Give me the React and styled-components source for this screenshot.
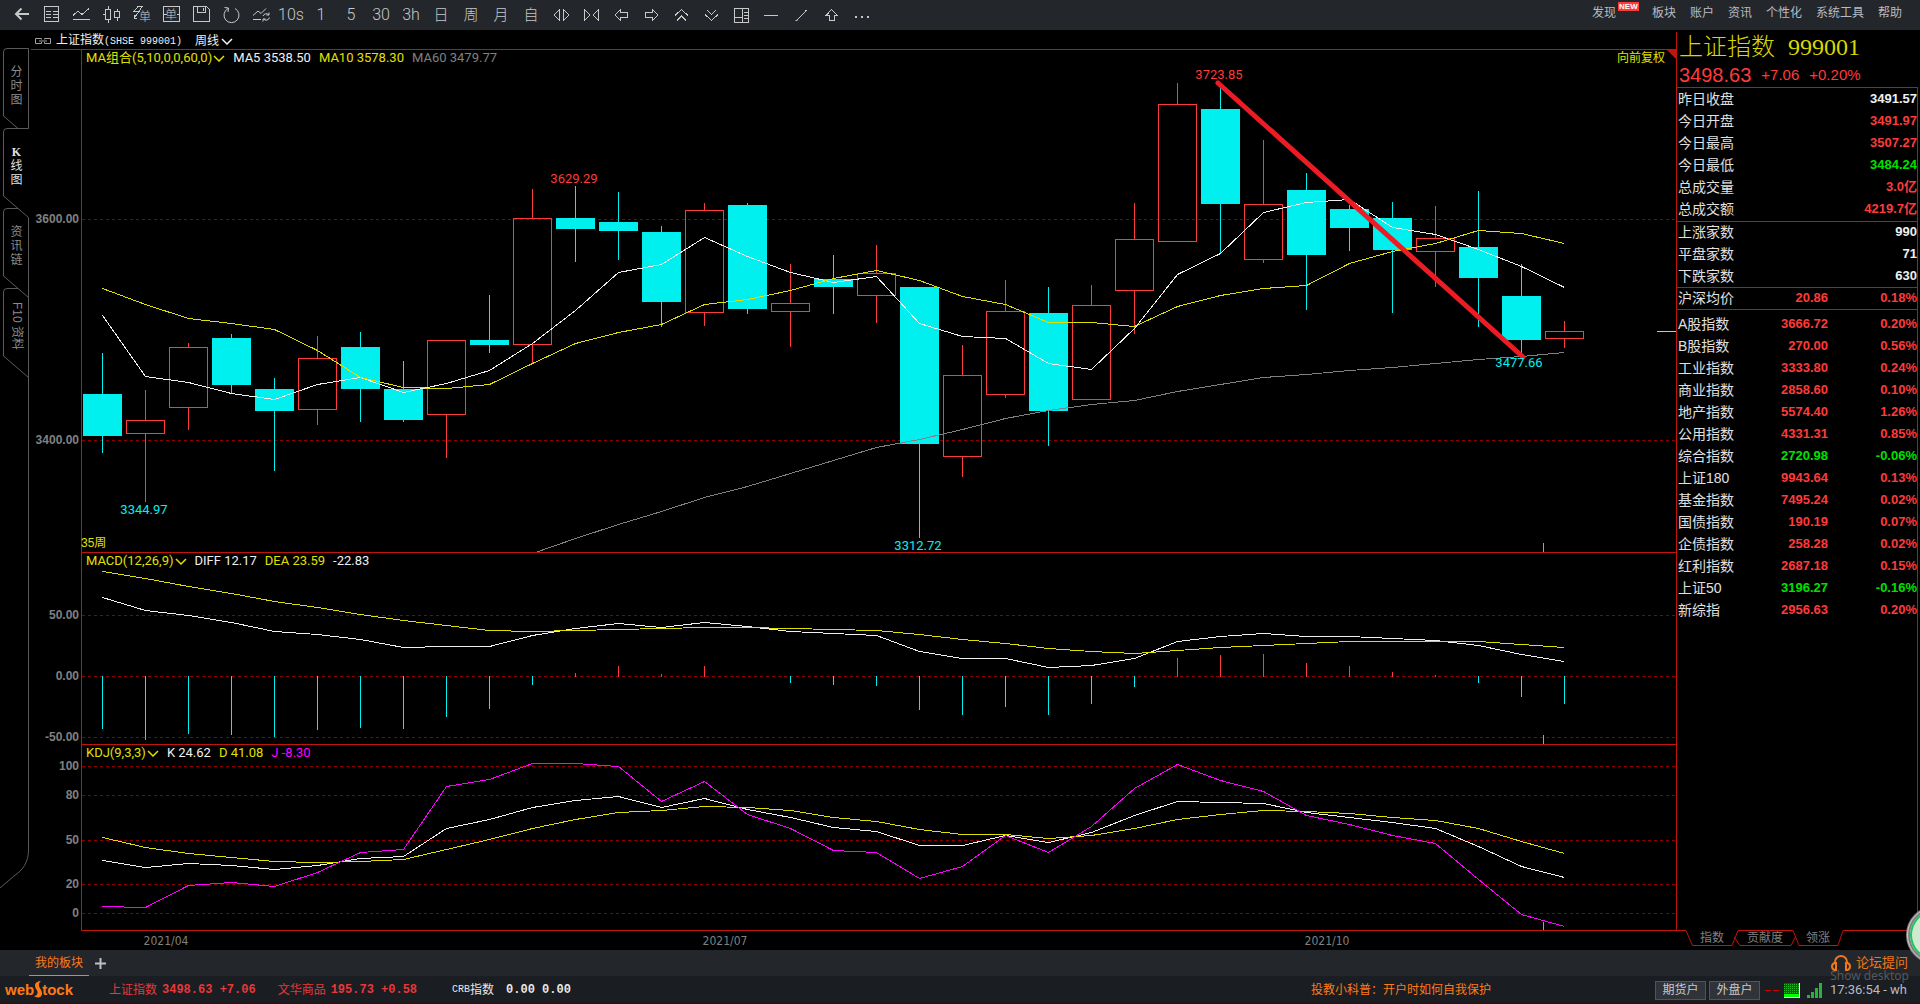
import React from "react";
import styled, { createGlobalStyle } from "styled-components";

const RED = "#c0140c";
const UP = "#ff3a3a";
const DOWN = "#00f0f0";
const YELLOW = "#e0e000";
const WHITE = "#f0f0f0";
const GREY = "#808080";
const PINK = "#ff00ff";

// plot area in chart units, one candle every 43 units
const LEFT = 81;
const WIDTH = 1595;
const xOf = (i) => 102 + i * 43;

// high, body top, body bottom, low, rising
const candles = [
  [353, 394, 436, 453, 0], [390, 420, 433, 502, 1], [343, 347, 407, 430, 1],
  [334, 338, 385, 393, 0], [378, 389, 411, 471, 0], [336, 358, 409, 425, 1],
  [332, 347, 389, 422, 0], [361, 389, 420, 422, 0], [340, 340, 414, 458, 1],
  [295, 340, 345, 353, 0], [189, 218, 344, 363, 1], [186, 218, 229, 262, 0],
  [192, 222, 231, 260, 0], [226, 232, 302, 327, 0], [203, 210, 312, 326, 1],
  [203, 205, 309, 314, 0], [264, 303, 311, 347, 1], [255, 279, 287, 314, 0],
  [245, 273, 295, 323, 1], [287, 287, 444, 538, 0], [345, 375, 456, 477, 1],
  [280, 311, 394, 398, 1], [287, 313, 411, 446, 0], [285, 305, 399, 400, 1],
  [203, 239, 290, 334, 1], [83, 104, 241, 242, 1], [88, 109, 204, 254, 0],
  [140, 204, 259, 263, 1], [173, 190, 255, 310, 0], [205, 209, 228, 251, 0],
  [202, 218, 250, 313, 0], [206, 238, 251, 287, 1], [191, 247, 278, 327, 0],
  [264, 296, 340, 353, 0], [321, 331, 338, 348, 1],
];

const ma5 = [315, 376, 382, 393, 399, 384, 377, 392, 383, 370, 343, 310, 272, 264, 237, 256, 272, 282, 276, 323, 336, 338, 363, 369, 328, 274, 253, 212, 202, 199, 227, 234, 249, 266, 287];
const ma10 = [288, 304, 318, 323, 329, 350, 377, 387, 388, 384, 363, 343, 332, 324, 304, 299, 290, 278, 270, 280, 296, 304, 322, 322, 326, 306, 295, 288, 285, 263, 251, 243, 230, 233, 243];
const ma60 = [553, 538, 524, 511, 497, 486, 473, 460, 447, 439, 429, 418, 410, 404, 400, 391, 384, 377, 374, 370, 367, 363, 359, 356, 352];

const diff = [597, 610, 615, 622, 631, 634, 639, 647, 646, 646, 635, 628, 623, 627, 622, 626, 631, 633, 635, 651, 658, 658, 667, 665, 658, 641, 636, 633, 636, 636, 638, 640, 645, 654, 661];
const dea = [571, 578, 586, 593, 601, 607, 614, 620, 625, 630, 631, 630, 629, 628, 627, 627, 628, 629, 630, 634, 639, 643, 648, 651, 653, 650, 647, 645, 643, 641, 641, 641, 641, 644, 647];
const macd = [729, 740, 734, 735, 737, 730, 728, 729, 717, 709, 685, 673, 666, 674, 666, 676, 683, 685, 686, 710, 715, 707, 715, 704, 687, 658, 655, 654, 663, 666, 672, 675, 683, 697, 704];

const kLine = [860, 867, 863, 865, 869, 865, 858, 856, 828, 819, 807, 800, 796, 807, 798, 809, 817, 827, 831, 845, 845, 835, 842, 832, 815, 801, 802, 803, 812, 817, 822, 828, 846, 866, 877];
const dLine = [837, 847, 853, 857, 861, 862, 861, 859, 849, 839, 828, 819, 812, 810, 806, 807, 810, 817, 821, 829, 834, 834, 838, 835, 828, 819, 814, 810, 811, 813, 817, 820, 828, 841, 853];
const jLine = [906, 907, 885, 882, 886, 872, 852, 849, 786, 779, 763, 763, 766, 801, 781, 814, 828, 850, 852, 878, 866, 835, 852, 826, 788, 764, 780, 791, 815, 824, 835, 843, 879, 914, 926];

const marks = [
  ["3629.29", 574, 179, UP],
  ["3344.97", 144, 510, DOWN],
  ["3312.72", 918, 546, DOWN],
  ["3723.85", 1219, 75, UP],
  ["3477.66", 1519, 363, DOWN],
];

const quoteBlocks = [
  [
    ["昨日收盘", "", "3491.57", "flat"],
    ["今日开盘", "", "3491.97", "up"],
    ["今日最高", "", "3507.27", "up"],
    ["今日最低", "", "3484.24", "down"],
    ["总成交量", "", "3.0亿", "up"],
    ["总成交额", "", "4219.7亿", "up"],
  ],
  [
    ["上涨家数", "", "990", "flat"],
    ["平盘家数", "", "71", "flat"],
    ["下跌家数", "", "630", "flat"],
  ],
  [["沪深均价", "20.86", "0.18%", "up"]],
  [
    ["A股指数", "3666.72", "0.20%", "up"],
    ["B股指数", "270.00", "0.56%", "up"],
    ["工业指数", "3333.80", "0.24%", "up"],
    ["商业指数", "2858.60", "0.10%", "up"],
    ["地产指数", "5574.40", "1.26%", "up"],
    ["公用指数", "4331.31", "0.85%", "up"],
    ["综合指数", "2720.98", "-0.06%", "down"],
    ["上证180", "9943.64", "0.13%", "up"],
    ["基金指数", "7495.24", "0.02%", "up"],
    ["国债指数", "190.19", "0.07%", "up"],
    ["企债指数", "258.28", "0.02%", "up"],
    ["红利指数", "2687.18", "0.15%", "up"],
    ["上证50", "3196.27", "-0.16%", "down"],
    ["新综指", "2956.63", "0.20%", "up"],
  ],
];

const tones = { up: UP, down: "#00e000", flat: WHITE };

const icons = {
  back: <path d="M5 9H18M10.5 3.5 5 9l5.5 5.5" strokeWidth="2" shapeRendering="auto" />,
  table: <path d="M3.5 1.5h14v15h-14zM5 6.5h5M11.5 6.5h5M5 9.5h5M11.5 9.5h5M5 12.5h5M11.5 12.5h5" />,
  line: <path d="M2 10.5 7 6l4 3.5L18 3.5M2 14.5H19" />,
  candle: <path d="M4.5 4.5h5v10h-5zM7.5 1v3.5M7.5 14.5V18M13.5 6.5h5v6h-5zM16.5 4v2.5M16.5 12.5v3M2 9.5h2" />,
  flash: <path d="M7 1.5l-4 5h5L3 13M7 1.5h4l-3 5M3 10v3h3" />,
  box: <path d="M2.5 1.5h16v15h-16zM2.5 9.5h3M15.5 9.5h3" />,
  save: <path d="M2.5 1.5h13l3 3v12h-16zM6.5 1.5v6h8v-6M12.5 3v3" />,
  refresh: <path d="M7 3.5a7.5 7.5 0 1 0 7 0M3.5 2.5l4 .5-.5 4" shapeRendering="auto" />,
  trend: <path d="M2 10.5 7 6l3 2.5 5-5M2 14.5h8M12 11a3.5 3.5 0 0 1 6-1M18 7.5V10h-2.5M18.500 12.5a3.5 3.5 0 0 1-6 1.5M12 16.5V14h2.5" shapeRendering="auto" />,
  spread: <path d="M8.5 4.5 3 10l5.5 5.5zM12.5 4.5v11L18 10z" />,
  squeeze: <path d="M3.5 4.5 9 10l-5.5 5.5zM17.5 4.5 12 10l5.5 5.5z" />,
  left: <path d="M9.5 4.5 4 10l5.5 5.5v-3h7v-5h-7z" />,
  right: <path d="M11.5 4.5 17 10l-5.5 5.5v-3h-7v-5h7z" />,
  up: <path d="M4 10.5l6.5-6 6.5 6M6 15.5l4.5-4.5 4.5 4.5" />,
  down: <path d="M4 9.5l6.5 6 6.5-6M6 5l4.5 4.5L15 5" />,
  layout: <path d="M3.5 3.5h14v14h-14zM11.5 3.5v14M3.5 12.5h8M13 7.5h3.5M13 10.5h3.5M13 13.5h3.5" />,
  minus: <path d="M3 10.5h14" />,
  segment: <path d="M6 15 15 6M4.500 15.500h2M14 5.500h2" shapeRendering="auto" />,
  raise: <path d="M10.5 4.5 5.5 10h3v5.5h5V10h2.500z" />,
  more: <path d="M4 12h2M10 12h2M16 12h2" strokeWidth="2" />,
};

const tools = [
  ["back", "返回"], ["table", "报价"], ["line", "分时"], ["candle", "K线"], ["flash", "闪电下单", "单"],
  ["box", "下单", "单"], ["save", "保存"], ["refresh", "刷新"], ["trend", "叠加"],
  "10s", "1", "5", "30", "3h", "日", "周", "月", "自",
  ["spread", "放大"], ["squeeze", "缩小"], ["left", "左移"], ["right", "右移"], ["up", "上一个"],
  ["down", "下一个"], ["layout", "布局"], ["minus", "水平线"], ["segment", "线段"], ["raise", "上箭头"], ["more", "更多"],
];

function Tool({ item }) {
  if (typeof item === "string") {
    return <ToolButton $cjk={item > "z"}>{item}</ToolButton>;
  }
  const [name, label, glyph] = item;
  return (
    <ToolButton aria-label={label}>
      <ToolIcon viewBox="0 0 20 20">
        {icons[name]}
        {glyph && <text x={name === "box" ? 4 : 8} y={name === "box" ? 14 : 16}>{glyph}</text>}
      </ToolIcon>
    </ToolButton>
  );
}

function Chevron({ color }) {
  return (
    <svg width="12" height="8" viewBox="0 0 12 8" fill="none" stroke={color} strokeWidth="1.5" aria-hidden="true">
      <path d="M1 2l5 5 5-5" />
    </svg>
  );
}

function Line({ data, color, from = 0 }) {
  const points = data.map((y, i) => `${xOf(i + from) + 0.5},${y + 0.5}`).join(" ");
  return <polyline points={points} fill="none" stroke={color} />;
}

function Candle({ x, data }) {
  const [high, top, bottom, low, rising] = data;
  if (!rising) {
    return (
      <g fill={DOWN}>
        <rect x={x} y={high} width="1" height={low - high} />
        <rect x={x - 19} y={top} width="39" height={bottom - top} />
      </g>
    );
  }
  return (
    <g stroke={UP} fill="none">
      <path d={`M${x + 0.5} ${high}V${top}M${x + 0.5} ${bottom}V${low}`} />
      <rect x={x - 18.5} y={top + 0.5} width="38" height={bottom - top} />
    </g>
  );
}

function Pane({ top, height, axis, first, last, legend, children }) {
  const [title, ...values] = legend;
  return (
    <PaneRow $grow={height}>
      <Axis $lined={first}>
        {axis.map(([label, y]) => (
          <AxisLabel key={label} style={{ top: `${((y - top) / height) * 100}%` }}>{label}</AxisLabel>
        ))}
      </Axis>
      <Plot>
        <PlotSvg viewBox={`${LEFT} ${top} ${WIDTH} ${height}`} preserveAspectRatio="none" role="img" aria-label={title[0]}>
          {axis.map(([label, y]) => (
            <path key={label} d={`M82 ${y + 0.5}H1676`} stroke="#8c0000" strokeDasharray="3 3" />
          ))}
          {children}
          <path d={`M1543.5 ${top + height - 9}v9`} stroke="#a0a0a0" />
          <path d={`M81.5 ${top + height}V${top + 0.5}H1676`} stroke={RED} fill="none" />
          {last && <path d="M81 930.5H1676" stroke={RED} />}
        </PlotSvg>
        <Legend>
          <Indicator $color={title[1]}>{title[0]}<Chevron color={title[1]} /></Indicator>
          {values.map(([text, color]) => (
            <LegendItem key={text} $color={color}>{text}</LegendItem>
          ))}
        </Legend>
        {first && (
          <>
            <Adjust>向前复权</Adjust>
            <Corner />
            <Span>35周</Span>
            {marks.map(([text, x, y, color]) => (
              <Mark
                key={text}
                $color={color}
                style={{ left: `${((x - LEFT) / WIDTH) * 100}%`, top: `${((y - top) / height) * 100}%` }}
              >
                {text}
              </Mark>
            ))}
          </>
        )}
      </Plot>
    </PaneRow>
  );
}

function Charts() {
  return (
    <ChartColumn>
      <ChartHead>
        <svg width="16" height="6" viewBox="0 0 16 6" fill="none" stroke="#a0a0a0" aria-hidden="true">
          <path d="M6.5 1.5v-1h-6v5h6V4M9.5 1.5v-1h6v5h-6V4M4 3h8" />
        </svg>
        <Symbol>上证指数<SymbolCode>(SHSE 999001)</SymbolCode></Symbol>
        <Period>周线<Chevron color={WHITE} /></Period>
      </ChartHead>
      <Pane
        first
        top={49}
        height={503}
        axis={[["3600.00", 219], ["3400.00", 440]]}
        legend={[["MA组合(5,10,0,0,60,0)", YELLOW], ["MA5 3538.50", WHITE], ["MA10 3578.30", YELLOW], ["MA60 3479.77", GREY]]}
      >
        {candles.map((c, i) => <Candle key={i} x={xOf(i)} data={c} />)}
        <Line data={ma60} color={GREY} from={10} />
        <Line data={ma5} color={WHITE} />
        <Line data={ma10} color={YELLOW} />
        <path d="M1657 331.5H1676" stroke={YELLOW} />
        <path d="M1218 83 1523 357" stroke="#ed1c24" strokeWidth="5" strokeLinecap="round" shapeRendering="auto" />
      </Pane>
      <Pane
        top={552}
        height={192}
        axis={[["50.00", 615], ["0.00", 676], ["-50.00", 737]]}
        legend={[["MACD(12,26,9)", YELLOW], ["DIFF 12.17", WHITE], ["DEA 23.59", YELLOW], ["-22.83", WHITE]]}
      >
        {macd.map((y, i) => y !== 676 && (
          <path key={i} d={`M${xOf(i) + 0.5} ${y > 676 ? 676 : 677}V${y}`} stroke={y > 676 ? DOWN : UP} />
        ))}
        <Line data={diff} color={WHITE} />
        <Line data={dea} color={YELLOW} />
      </Pane>
      <Pane
        last
        top={744}
        height={187}
        axis={[["100", 766], ["80", 795], ["50", 840], ["20", 884], ["0", 913]]}
        legend={[["KDJ(9,3,3)", YELLOW], ["K 24.62", WHITE], ["D 41.08", YELLOW], ["J -8.30", PINK]]}
      >
        <Line data={kLine} color={WHITE} />
        <Line data={dLine} color={YELLOW} />
        <Line data={jLine} color={PINK} />
      </Pane>
      <Dates>
        {[["2021/04", 166], ["2021/07", 725], ["2021/10", 1327]].map(([text, x]) => (
          <DateLabel key={text} style={{ left: `${((x - LEFT) / WIDTH) * 100}%` }}>{text}</DateLabel>
        ))}
      </Dates>
    </ChartColumn>
  );
}

function Quotes() {
  return (
    <QuotePanel>
      <QuoteBody>
        <QuoteTitle>上证指数 <TitleCode>999001</TitleCode></QuoteTitle>
        <QuotePrice>
          <Price>3498.63</Price>
          <span>+7.06</span>
          <span>+0.20%</span>
        </QuotePrice>
        {quoteBlocks.map((rows, i) => (
          <Block key={i} $pad={i === 0 ? "1px 0" : i === 3 ? "4px 0 0" : "0"}>
            <Table>
              <tbody>
                {rows.map(([name, price, value, tone]) => (
                  <tr key={name}>
                    <Name scope="row">{name}</Name>
                    <Cell $tone={tone}>{price}</Cell>
                    <Cell $tone={tone}>{value}</Cell>
                  </tr>
                ))}
              </tbody>
            </Table>
          </Block>
        ))}
      </QuoteBody>
      <QuoteTabs>
        <TabLines viewBox="0 0 244 20">
          <path d="M0 .5H10L16.5 15.5H56L62 .5H117L123 15.5H162L167 .5H241M58 7 64 15.5H115L119.5 7" />
        </TabLines>
        <QuoteTab>指数</QuoteTab>
        <QuoteTab>贡献度</QuoteTab>
        <QuoteTab>领涨</QuoteTab>
      </QuoteTabs>
    </QuotePanel>
  );
}

export default function App() {
  return (
    <Page>
      <GlobalStyle />
      <Toolbar>
        <Tools>
          {tools.map((item, i) => <Tool key={i} item={item} />)}
        </Tools>
        <Menu>
          <MenuLink href="#" $badge>发现<Badge>NEW</Badge></MenuLink>
          <MenuLink href="#">板块</MenuLink>
          <MenuLink href="#">账户</MenuLink>
          <MenuLink href="#">资讯</MenuLink>
          <MenuLink href="#">个性化</MenuLink>
          <MenuLink href="#">系统工具</MenuLink>
          <MenuLink href="#">帮助</MenuLink>
        </Menu>
      </Toolbar>

      <Main>
        <Side>
          <SideLines viewBox="0 0 31 920">
            <path d="M28.5 98.5v-80H7q-3.5 0-3.5 3.5v64L18 98.5" />
            <path d="M28.5 98.5H7q-3.5 0-3.5 3.5v64l25 21.5V820C28.5 832 23 840 14 846L0 858" />
            <path d="M18 178.5H7q-3.5 0-3.5 3.5v64l25 21.5" />
            <path d="M18 258.5H7q-3.5 0-3.5 3.5v64l25 21.5" />
          </SideLines>
          <SideTab>分<br />时<br />图</SideTab>
          <SideTab $active><b>K</b>线<br />图</SideTab>
          <SideTab>资<br />讯<br />链</SideTab>
          <SideTab $sideways>F10 资料</SideTab>
        </Side>
        <Charts />
        <Quotes />
      </Main>

      <BoardBar>
        <BoardTab>我的板块</BoardTab>
        <AddButton aria-label="添加板块">
          <svg width="11" height="11" viewBox="0 0 11 11" stroke="#c0c0c0" strokeWidth="2">
            <path d="M5.5 0v11M0 5.5h11" />
          </svg>
        </AddButton>
        <Forum href="#">
          <svg width="20" height="16" viewBox="0 0 20 16" fill="none" stroke="currentColor" strokeWidth="2" aria-hidden="true">
            <path d="M4 9V7a6 6 0 0 1 12 0v2" />
            <path d="M5 8v7H3.5Q1 14 1 11.5T3.5 8zM15 8v7h1.5Q19 14 19 11.5T16.5 8z" />
          </svg>
          论坛提问
        </Forum>
        <Tip>Show desktop</Tip>
        <Bubble />
      </BoardBar>

      <StatusBar>
        <Logo>
          web
          <svg width="8" height="18" viewBox="0 0 8 18" aria-hidden="true">
            <path d="M7 0C4 0 1 1.500 1 4.500c0 3.500 3 4.500 2.500 7.500C3.300 14 2 15 0 15c2 2 7.500 2.500 8-2C8.300 9 5 7.500 5 4 5 2 5.500 1 7 0z" fill="#ff7a18" />
          </svg>
          tock
        </Logo>
        <Ticker href="#">上证指数<b>3498.63 +7.06</b></Ticker>
        <Ticker href="#">文华商品<b>195.73 +0.58</b></Ticker>
        <Ticker href="#" $plain><SymbolCode>CRB</SymbolCode>指数<b>0.00 0.00</b></Ticker>
        <News href="#">投教小科普：开户时如何自我保护</News>
        <Accounts>
          <Account>期货户</Account>
          <Account>外盘户</Account>
        </Accounts>
        <Signals width="60" height="18" viewBox="0 0 60 18" aria-hidden="true">
          <path d="M1 9.5h6M9 9.5h6" stroke="#d00000" />
          <rect x="20" y="2" width="16" height="15" fill="#f0fff0" />
          <rect x="20" y="2" width="15" height="14" fill="#0a5a14" />
          <path d="M20 3.5h15M20 5.5h15M20 7.5h15M20 9.5h15M20 11.5h15" stroke="#28b428" strokeDasharray="1 1" />
          <rect x="20" y="13" width="15" height="3" fill="#00ff00" />
          <path d="M43 14h3v3h-3zM47 11h3v6h-3zM51 7h3v10h-3zM55 2h3v15h-3z" fill="#28b43c" />
        </Signals>
        <Clock>17:36:54 - wh</Clock>
      </StatusBar>
    </Page>
  );
}

const GlobalStyle = createGlobalStyle`
  body {
    margin: 0;
    background: #000;
  }
  * {
    box-sizing: border-box;
  }
  button {
    padding: 0;
    border: 0;
    background: none;
    color: inherit;
    font: inherit;
    cursor: pointer;
  }
  a {
    text-decoration: none;
  }
`;

const Page = styled.div`
  display: flex;
  flex-direction: column;
  height: 100vh;
  min-height: 720px;
  overflow: hidden;
  background: #000;
  color: #ccc;
  font-family: "Liberation Sans", "Noto Sans CJK SC", sans-serif;
  font-size: 12px;
  line-height: 18px;
  white-space: nowrap;
`;

const Toolbar = styled.header`
  display: flex;
  justify-content: space-between;
  flex: none;
  height: 30px;
  padding: 0 18px 0 6px;
  background: #23262b;
`;

const Tools = styled.div`
  display: flex;
  align-items: center;
`;

const ToolButton = styled.button`
  && {
    display: flex;
    align-items: center;
    justify-content: center;
    width: 30px;
    height: 28px;
    color: #c8c8c8;
    font-family: Roboto, "Noto Sans CJK SC", sans-serif;
    font-size: ${(p) => (p.$cjk ? "15px" : "16px")};
    font-weight: 300;
  }
`;

const ToolIcon = styled.svg`
  width: 20px;
  height: 20px;
  fill: none;
  stroke: #c8c8c8;
  shape-rendering: crispEdges;
  text {
    fill: #c8c8c8;
    stroke: none;
    font-size: 12px;
  }
`;

const Menu = styled.nav`
  display: flex;
  gap: 14px;
  padding-top: 4px;
`;

const MenuLink = styled.a`
  position: relative;
  padding-right: ${(p) => (p.$badge ? "22px" : "0")};
  color: #b8bcc2;
`;

const Badge = styled.span`
  position: absolute;
  top: -2px;
  right: -1px;
  width: 21px;
  background: #ff3a3a;
  color: #fff;
  font-size: 8px;
  font-weight: bold;
  line-height: 9px;
  text-align: center;
`;

const Main = styled.main`
  display: flex;
  flex: 1;
  min-height: 0;
`;

const Side = styled.nav`
  position: relative;
  display: flex;
  flex: none;
  flex-direction: column;
  width: 31px;
  padding-top: 18px;
`;

const SideLines = styled.svg`
  position: absolute;
  top: 0;
  left: 0;
  width: 31px;
  height: 920px;
  fill: none;
  stroke: #5a5a5a;
  pointer-events: none;
`;

const SideTab = styled.button`
  && {
    display: flex;
    flex-direction: column;
    align-items: center;
    justify-content: center;
    flex: none;
    height: 80px;
    padding: 0 0 4px 2px;
    color: ${(p) => (p.$active ? "#e0e0e0" : "#8c8c8c")};
    line-height: 14px;
    writing-mode: ${(p) => (p.$sideways ? "vertical-rl" : "horizontal-tb")};
    text-orientation: sideways;
  }
  b {
    font-family: "Liberation Serif", serif;
  }
`;

const ChartColumn = styled.section`
  display: flex;
  flex: 1;
  flex-direction: column;
  min-width: 0;
`;

const ChartHead = styled.div`
  display: flex;
  align-items: center;
  flex: none;
  gap: 5px;
  height: 19px;
  padding: 2px 0 0 4px;
  color: ${WHITE};
`;

const Symbol = styled.span`
  margin-right: 8px;
`;

const SymbolCode = styled.span`
  font-family: "Liberation Mono", monospace;
  font-size: 10px;
`;

const Period = styled.button`
  display: flex;
  align-items: center;
  gap: 2px;
`;

const PaneRow = styled.div`
  display: flex;
  flex: ${(p) => p.$grow} 1 0;
  min-height: 0;
`;

const Axis = styled.div`
  position: relative;
  flex: none;
  width: 50px;
  box-shadow: ${(p) => (p.$lined ? `inset 0 1px 0 ${RED}` : "none")};
`;

const AxisLabel = styled.span`
  position: absolute;
  right: 2px;
  transform: translateY(-50%);
  color: ${GREY};
  font-weight: bold;
`;

const Plot = styled.div`
  position: relative;
  flex: 1;
  min-width: 0;
`;

const PlotSvg = styled.svg`
  position: absolute;
  inset: 0;
  width: 100%;
  height: 100%;
  shape-rendering: crispEdges;
`;

const Legend = styled.div`
  position: relative;
  display: flex;
  gap: 8px;
  padding-left: 5px;
  font-family: Roboto, "Noto Sans CJK SC", sans-serif;
  font-size: 13px;
`;

const LegendItem = styled.span`
  color: ${(p) => p.$color};
`;

const Indicator = styled.button`
  && {
    display: flex;
    align-items: center;
    gap: 1px;
    color: ${(p) => p.$color};
  }
`;

const Adjust = styled.button`
  && {
    position: absolute;
    top: 0;
    right: 11px;
    color: ${YELLOW};
  }
`;

const Corner = styled.span`
  position: absolute;
  top: 0;
  right: 0;
  border: 5px solid transparent;
  border-top-color: ${RED};
  border-right-color: ${RED};
`;

const Span = styled.span`
  position: absolute;
  bottom: 0;
  left: 0;
  color: ${YELLOW};
`;

const Mark = styled.span`
  position: absolute;
  transform: translate(-50%, -50%);
  color: ${(p) => p.$color};
  font-family: Roboto, sans-serif;
  font-size: 13px;
`;

const Dates = styled.div`
  position: relative;
  flex: none;
  height: 19px;
  margin-left: 50px;
`;

const DateLabel = styled.span`
  position: absolute;
  top: 1px;
  transform: translateX(-50%);
  color: ${GREY};
  font-family: "DejaVu Sans Condensed", sans-serif;
`;

const QuotePanel = styled.aside`
  display: flex;
  flex: none;
  flex-direction: column;
  width: 244px;
  padding-top: 2px;
`;

const QuoteBody = styled.div`
  flex: 1;
  min-height: 0;
  margin-right: 2px;
  border-left: 1px solid ${RED};
`;

const QuoteTitle = styled.h1`
  margin: 0;
  padding-left: 2px;
  color: #d8d800;
  font-family: "Liberation Serif", "Noto Sans CJK SC", serif;
  font-size: 24px;
  font-weight: 300;
  line-height: 30px;
`;

const TitleCode = styled.span`
  margin-left: 7px;
`;

const QuotePrice = styled.div`
  display: flex;
  align-items: center;
  gap: 10px;
  height: 25px;
  padding-left: 2px;
  color: ${UP};
  font-size: 15px;
`;

const Price = styled.strong`
  font-size: 20px;
  font-weight: normal;
`;

const Block = styled.div`
  padding: ${(p) => p.$pad};
  border-right: 1px solid ${RED};
  box-shadow: inset 0 1px 0 ${RED};
  &:last-child {
    height: calc(100% - 277px);
  }
`;

const Table = styled.table`
  width: 100%;
  border-collapse: collapse;
  table-layout: fixed;
`;

const Name = styled.th`
  width: 76px;
  height: 22px;
  padding: 0 0 0 1px;
  color: #e0e0e0;
  font-size: 14px;
  font-weight: normal;
  text-align: left;
`;

const Cell = styled.td`
  padding: 0;
  color: ${(p) => tones[p.$tone]};
  font-size: 13px;
  font-weight: bold;
  text-align: right;
  &:nth-child(2) {
    width: 75px;
  }
`;

const QuoteTabs = styled.div`
  position: relative;
  display: flex;
  flex: none;
  gap: 23px;
  height: 20px;
  padding-left: 24px;
`;

const TabLines = styled.svg`
  position: absolute;
  top: 0;
  left: 0;
  width: 244px;
  height: 20px;
  fill: none;
  stroke: ${RED};
  pointer-events: none;
`;

const QuoteTab = styled.button`
  && {
    height: 17px;
    color: ${GREY};
    line-height: 17px;
  }
`;

const BoardBar = styled.div`
  position: relative;
  display: flex;
  align-items: center;
  flex: none;
  height: 26px;
  padding: 0 12px 0 29px;
  background: #23262b;
`;

const BoardTab = styled.button`
  && {
    height: 26px;
    padding: 0 6px;
    border-bottom: 1px solid #ff7a18;
    color: #ff7a18;
  }
`;

const AddButton = styled.button`
  display: flex;
  margin-left: 6px;
`;

const Forum = styled.a`
  display: flex;
  align-items: center;
  gap: 5px;
  margin-left: auto;
  color: #f07818;
  font-size: 13px;
`;

const Tip = styled.span`
  position: absolute;
  right: 11px;
  bottom: -9px;
  z-index: 1;
  color: #55585c;
  font-family: "Noto Sans", sans-serif;
`;

const Bubble = styled.span`
  position: absolute;
  right: -44px;
  bottom: 12px;
  width: 58px;
  height: 58px;
  border: 4px solid #808080;
  border-radius: 50%;
  outline: 1px solid #d0d0d0;
  outline-offset: -2px;
  background: #cfeacf;
  box-shadow: inset 0 0 0 2px #18c860;
`;

const StatusBar = styled.footer`
  display: flex;
  align-items: center;
  flex: none;
  height: 28px;
  padding: 2px 13px 0 5px;
  border-bottom: 2px solid #22181c;
  background: #1a1d22;
`;

const Logo = styled.div`
  display: flex;
  align-items: center;
  width: 104px;
  color: #ff7a18;
  font-size: 15px;
  font-weight: bold;
`;

const Ticker = styled.a`
  display: flex;
  align-items: center;
  margin-right: ${(p) => (p.$plain ? "0" : "22px")};
  color: ${(p) => (p.$plain ? "#e8e8e8" : "#e83838")};
  &:nth-of-type(3) {
    margin-left: 13px;
  }
  b {
    margin-left: ${(p) => (p.$plain ? "12px" : "5px")};
    font-family: "Liberation Mono", monospace;
  }
`;

const News = styled.a`
  margin-left: auto;
  color: #ff7a18;
`;

const Accounts = styled.div`
  display: flex;
  gap: 3px;
  margin: 0 4px 0 164px;
`;

const Account = styled.button`
  && {
    width: 51px;
    height: 19px;
    border: 1px solid #505458;
    background: #30343a;
    color: #c8c8c8;
    line-height: 17px;
  }
`;

const Signals = styled.svg`
  margin-right: 6px;
`;

const Clock = styled.time`
  color: #b8bcc2;
  font-family: Roboto, sans-serif;
  font-size: 13px;
`;
